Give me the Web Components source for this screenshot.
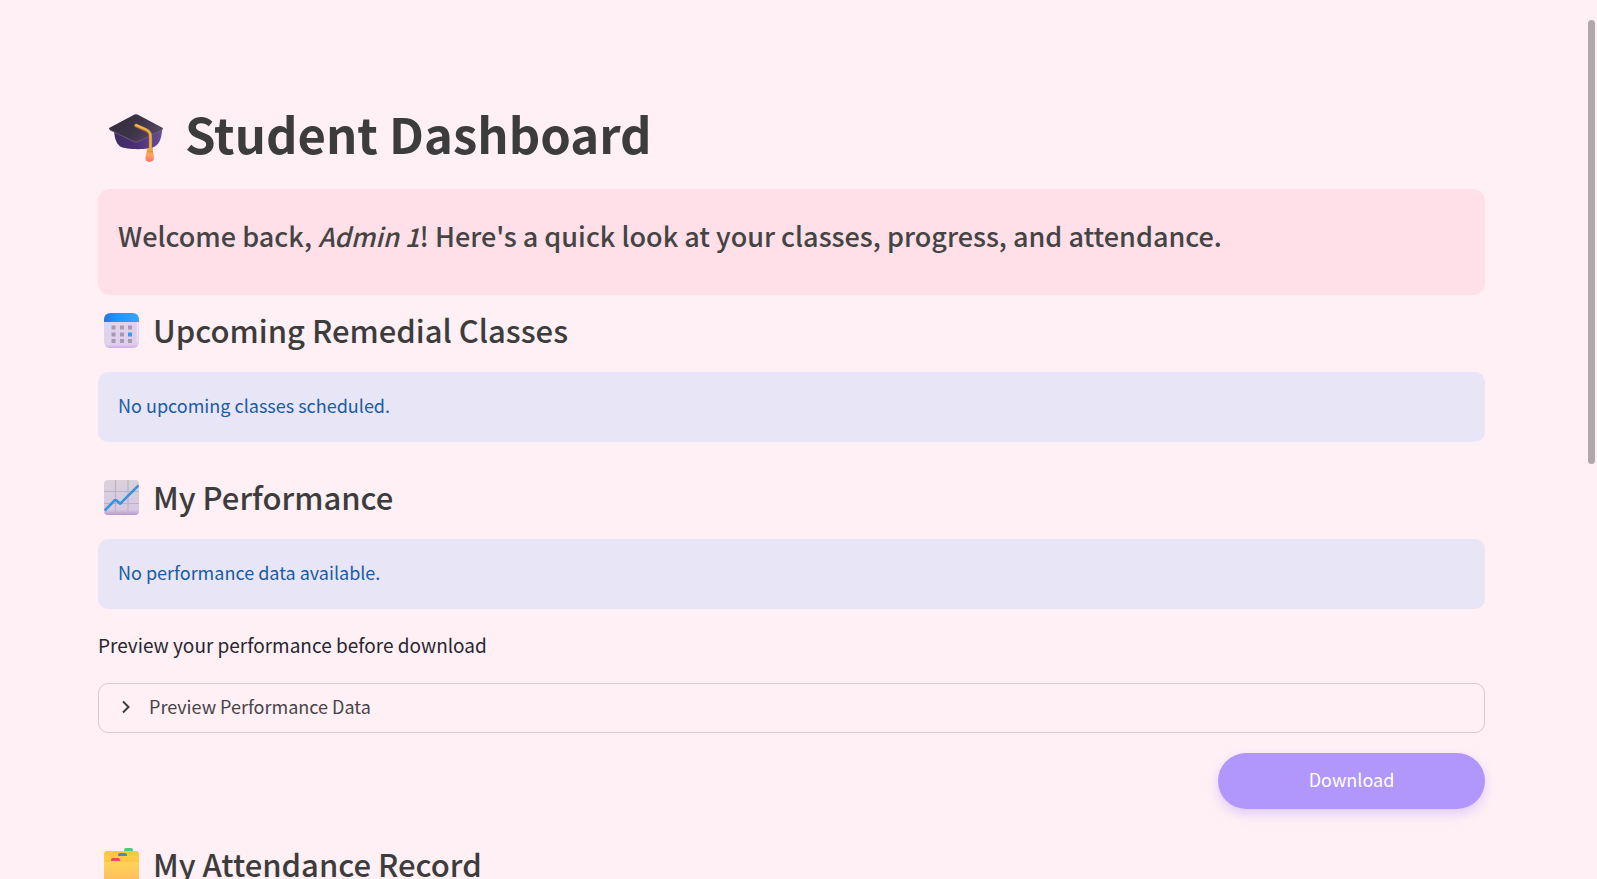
<!DOCTYPE html>
<html lang="en">
<head>
<meta charset="utf-8">
<title>Student Dashboard</title>
<style>
  body {
    margin: 0;
    background: #fff0f5;
    color: #3c3c3c;
    font-family: "Noto Sans CJK SC", "Noto Sans", sans-serif;
    font-size: 18px;
    line-height: 30px;
  }
  em { font-size: 26px; }
</style>
</head>
<body>
<dash-page>
  <dash-title>Student Dashboard</dash-title>
  <dash-welcome>Welcome back, <em>Admin 1</em>! Here's a quick look at your classes, progress, and attendance.</dash-welcome>
  <dash-heading icon="calendar" compact>Upcoming Remedial Classes</dash-heading>
  <dash-info>No upcoming classes scheduled.</dash-info>
  <dash-heading icon="chart">My Performance</dash-heading>
  <dash-info>No performance data available.</dash-info>
  <dash-caption>Preview your performance before download</dash-caption>
  <dash-expander label="Preview Performance Data"></dash-expander>
  <dash-download>Download</dash-download>
  <dash-heading icon="folders">My Attendance Record</dash-heading>
</dash-page>

<script>
const define = (name, html, setup) => {
  const template = document.createElement('template');
  template.innerHTML = html;
  customElements.define(name, class extends HTMLElement {
    connectedCallback() {
      if (this.shadowRoot) return;
      this.attachShadow({ mode: 'open' }).append(template.content.cloneNode(true));
      if (setup) setup(this, this.shadowRoot);
    }
  });
};

define('dash-page', `
  <style>
    :host { display: block; height: 100vh; overflow: hidden; }
    main { display: flex; flex-direction: column; padding: 100px 112px 0 98px; }
    .thumb { position: fixed; top: 20px; right: 2px; width: 7px; height: 50.5%; border-radius: 4px; background: #b2a8ab; }
  </style>
  <main><slot></slot></main>
  <div class="thumb"></div>`);

define('dash-title', `
  <style>
    :host { display: block; margin-bottom: 23px; }
    h1 { display: flex; align-items: center; gap: 21px; margin: 0; padding-left: 10px; font-size: 49px; font-weight: 700; line-height: 66px; }
    svg { flex: none; width: 56px; height: 66px; }
  </style>
  <h1>
    <svg viewBox="0 0 56 66" aria-hidden="true">
      <defs>
        <linearGradient id="base" x1="0" x2="1"><stop offset="0" stop-color="#3e2b62"/><stop offset=".45" stop-color="#4c2d76"/><stop offset="1" stop-color="#65509a"/></linearGradient>
        <linearGradient id="top" x1="0" y1=".3" x2="1" y2=".7"><stop offset="0" stop-color="#322c3a"/><stop offset=".5" stop-color="#3e3449"/><stop offset="1" stop-color="#5b4b6b"/></linearGradient>
        <linearGradient id="tassel" x1="0" y1="0" x2="0" y2="1"><stop offset="0" stop-color="#e9a44a"/><stop offset=".5" stop-color="#ffa15c"/><stop offset="1" stop-color="#ff6f74"/></linearGradient>
      </defs>
      <path d="M6 28h48c0 9-2 15-7 18.500-6 3.500-28 3.500-35 0-4-3.500-6-9.500-6-18.500z" fill="url(#base)"/>
      <path d="M26.500 14.500q1.500-.7 3 0L54 27.500q2 1.200 0 2.400L30.500 41.500q-2.500 1.200-5 0L2 30q-2-1.200 0-2.400z" fill="url(#top)"/>
      <path d="M2 30l23.500 11.500q2.500 1.200 5 0L54 30" fill="none" stroke="#72657c" stroke-width=".8"/>
      <path d="M28 25.500l10 4.500q4.500 2.200 4.500 6.500V49" fill="none" stroke="#a36a35" stroke-width="3.600" stroke-linecap="round"/>
      <path d="M28 25.200l10 4.300q4.500 2.200 4.500 6.500V49" fill="none" stroke="#efb345" stroke-width="2.400" stroke-linecap="round"/>
      <path d="M38.800 48.500q3.300-1.600 6 0l.2 3.300q2 8.200-.5 9.300-3.300 1.600-6.200 0-2-1.800.5-9.300z" fill="url(#tassel)"/>
      <path d="M39 51.700h5.600" stroke="#d9803c" stroke-width=".8"/>
    </svg>
    <span><slot></slot></span>
  </h1>`);

define('dash-welcome', `
  <style>
    :host { display: block; padding: 29px 20px 41px; border-radius: 12px; background: #ffdfe8; color: #444; }
    h2 { margin: 0; font-size: 27px; font-weight: 500; line-height: 36px; }
  </style>
  <h2><slot></slot></h2>`);

const ICONS = {
  calendar: `
    <defs>
      <linearGradient id="page" x1="0" y1="0" x2="1" y2="1"><stop offset="0" stop-color="#e3d7ee"/><stop offset="1" stop-color="#dfcbe8"/></linearGradient>
      <linearGradient id="band" x1="0" x2="1"><stop offset="0" stop-color="#2177dc"/><stop offset=".35" stop-color="#2493ff"/><stop offset="1" stop-color="#37a2ff"/></linearGradient>
      <linearGradient id="foot" x1="0" y1="0" x2="0" y2="1"><stop offset=".9" stop-color="#d2b0ea" stop-opacity="0"/><stop offset="1" stop-color="#d0a8ea"/></linearGradient>
    </defs>
    <rect width="35" height="35" rx="6" fill="url(#page)"/>
    <rect width="35" height="35" rx="6" fill="url(#foot)"/>
    <path d="M0 9V7q0-7 7-7h21q7 0 7 7v2z" fill="url(#band)"/>
    <path d="M33.500 9.500v19" stroke="#ede3f2" stroke-width="1.500" stroke-linecap="round"/>
    <path d="M7.500 12.500h4v4h-4zM16 12.500h4v4h-4zM24 12.500h4v4h-4zM7.500 19.500h4v4h-4zM16 19.500h4v4h-4zM7.500 26h4v4h-4zM16 26h4v4h-4zM24 26h4v4h-4z" fill="#a799b2"/>
    <path d="M24 19.500h4v4h-4z" fill="#3699f5"/>`,
  chart: `
    <defs>
      <linearGradient id="sheet" x1="0" y1="0" x2="0" y2="1"><stop offset="0" stop-color="#d8d2da"/><stop offset=".85" stop-color="#d8c8e2"/><stop offset="1" stop-color="#b696cc"/></linearGradient>
    </defs>
    <rect width="35" height="35" rx="4" fill="url(#sheet)"/>
    <path d="M11.500 0v35M24 0v35M0 11.500h35M0 23.500h35" stroke="#beb3c6" stroke-width="1.200"/>
    <path d="M.8 30.500L10.500 20.500q1-.8 2 0l3.800 3.200L34.500 5.500" fill="none" stroke="#3595de" stroke-width="2.600" stroke-linejoin="round"/>`,
  folders: `
    <defs>
      <linearGradient id="front" x1="0" y1="0" x2="0" y2="1"><stop offset="0" stop-color="#ffd657"/><stop offset="1" stop-color="#ffbc5c"/></linearGradient>
    </defs>
    <path d="M20 5V3q0-2 2-2h5q2 0 2 2v2z" fill="#4ccb83"/>
    <path d="M0 7q0-3 3-3h29q3 0 3 3v26H0z" fill="#ffc73e"/>
    <path d="M14 10V8q0-2 2-2h5q2 0 2 2v2z" fill="#428bce"/>
    <path d="M0 11q0-2 2-2h31q2 0 2 2v23H0z" fill="#ffcb45"/>
    <path d="M7 15v-2q0-2 2-2h5q2 0 2 2v2z" fill="#fa3d5b"/>
    <path d="M0 16q0-2 2-2h31q2 0 2 2v16q0 3-3 3H3q-3 0-3-3z" fill="url(#front)"/>
    <path d="M1 14.200h33" stroke="#f4b83a" stroke-width=".7"/>`
};

define('dash-heading', `
  <style>
    :host { display: block; margin: 34px 0 21px; }
    :host([compact]) { margin-top: 14px; }
    h3 { display: flex; align-items: center; gap: 14px; margin: 0; padding-left: 6px; font-size: 31px; font-weight: 500; line-height: 42px; }
    svg { flex: none; width: 35px; height: 35px; }
  </style>
  <h3><svg viewBox="0 0 35 35" aria-hidden="true"></svg><span><slot></slot></span></h3>`,
  (host, root) => { root.querySelector('svg').innerHTML = ICONS[host.getAttribute('icon')]; });

define('dash-info', `
  <style>
    :host { display: block; padding: 18px 20px 22px; border-radius: 10px; background: #e8e5f6; color: #185ca6; }
    p { margin: 0; }
  </style>
  <p role="status"><slot></slot></p>`);

define('dash-caption', `
  <style>
    :host { display: block; margin: 21px 0 23px; color: #262730; font-size: 19px; }
    p { margin: 0; }
  </style>
  <p><slot></slot></p>`);

define('dash-expander', `
  <style>
    :host { display: block; margin-bottom: 20px; color: #484448; }
    details { border: 1px solid #d9cad1; border-radius: 10px; }
    summary { display: flex; align-items: center; gap: 18px; padding: 7px 22px 11px; list-style: none; cursor: pointer; }
    svg { flex: none; width: 10px; height: 24px; }
  </style>
  <details>
    <summary>
      <svg viewBox="0 0 10 24" fill="none" stroke="#3c3c3c" stroke-width="2" aria-hidden="true"><path d="M2 7.500l5.500 5.500L2 18.500"/></svg>
      <span></span>
    </summary>
    <slot></slot>
  </details>`,
  (host, root) => { root.querySelector('span').textContent = host.getAttribute('label'); });

define('dash-download', `
  <style>
    :host { display: flex; justify-content: flex-end; }
    button { width: 267px; padding: 11px 20px 15px; border: 0; border-radius: 28px; background: #b197fc; color: #fff; font: inherit; box-shadow: 0 5px 12px rgba(177, 151, 252, .4); cursor: pointer; }
  </style>
  <button type="button"><slot></slot></button>`);
</script>
</body>
</html>
